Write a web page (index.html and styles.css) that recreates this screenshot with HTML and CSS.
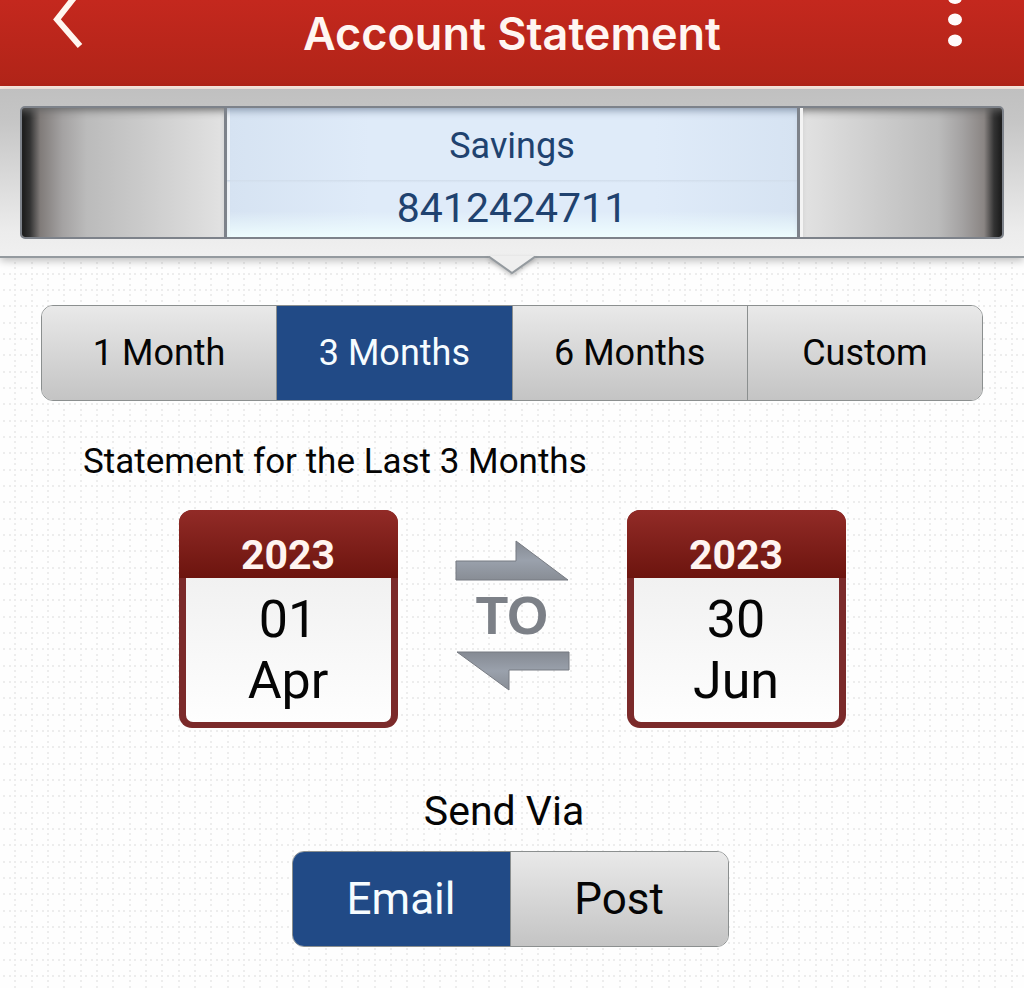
FILE: index.html
```html
<!DOCTYPE html>
<html lang="en">
<head>
<meta charset="utf-8">
<meta name="viewport" content="width=device-width, initial-scale=1">
<title>Account Statement</title>
<link rel="stylesheet" href="styles.css">
</head>
<body>
<header class="topbar">
  <button class="icon-button" type="button" aria-label="Back">
    <svg width="40" height="60" viewBox="0 0 40 60"><path d="M37 -15 L10 19.500 L33 46" fill="none" stroke="#fff6f0" stroke-width="6"/></svg>
  </button>
  <h1 class="title">Account Statement</h1>
  <button class="icon-button" type="button" aria-label="More options">
    <svg width="40" height="60" viewBox="0 0 40 60" fill="#fffafa"><ellipse cx="18" cy="-2" rx="7" ry="6"/><ellipse cx="18" cy="19.500" rx="7" ry="6"/><ellipse cx="18" cy="40.500" rx="7" ry="6"/></svg>
  </button>
</header>

<section class="account-panel" aria-label="Account">
  <div class="wheel">
    <div class="wheel-side wheel-left"></div>
    <div class="wheel-center">
      <p class="account-type">Savings</p>
      <p class="account-number">8412424711</p>
    </div>
    <div class="wheel-side wheel-right"></div>
  </div>
  <svg class="notch" width="48" height="26" viewBox="0 0 48 26" aria-hidden="true">
    <path d="M0 0 H48 L24 17 Z" fill="#efefef"/>
    <path d="M0 0 L24 17 L48 0" fill="none" stroke="#949a9f" stroke-width="2"/>
  </svg>
</section>

<main class="content">
  <div class="segments period" role="group" aria-label="Period">
    <button class="segment" type="button" aria-pressed="false">1 Month</button>
    <button class="segment" type="button" aria-pressed="true">3 Months</button>
    <button class="segment" type="button" aria-pressed="false">6 Months</button>
    <button class="segment" type="button" aria-pressed="false">Custom</button>
  </div>

  <p class="caption">Statement for the Last 3 Months</p>

  <div class="range">
    <button class="calendar" type="button">
      <span class="calendar-year">2023</span>
      <span class="calendar-date"><span>01</span><span>Apr</span></span>
    </button>
    <div class="direction">
      <svg width="115" height="42" viewBox="0 0 115 42" aria-hidden="true">
        <defs><linearGradient id="steel" x1="0" y1="0" x2="0" y2="1"><stop offset="0" stop-color="#858a93"/><stop offset="0.500" stop-color="#9aa1ac"/><stop offset="1" stop-color="#888d95"/></linearGradient></defs>
        <path d="M1 21 H61 V1 L113 40 H1 Z" fill="url(#steel)" stroke="#777b82" stroke-width="1"/>
      </svg>
      <span class="direction-label">TO</span>
      <svg width="115" height="42" viewBox="0 0 115 42" aria-hidden="true">
        <path d="M114 20 H54 V40 L2 2 H114 Z" fill="url(#steel)" stroke="#777b82" stroke-width="1"/>
      </svg>
    </div>
    <button class="calendar" type="button">
      <span class="calendar-year">2023</span>
      <span class="calendar-date"><span>30</span><span>Jun</span></span>
    </button>
  </div>

  <div class="delivery">
    <h2 class="send-title" id="send-title">Send Via</h2>
    <div class="segments send" role="group" aria-labelledby="send-title">
      <button class="segment" type="button" aria-pressed="true">Email</button>
      <button class="segment" type="button" aria-pressed="false">Post</button>
    </div>
  </div>
</main>
</body>
</html>
```
FILE: styles.css
```css
* { box-sizing: border-box; }

body {
  margin: 0;
  min-height: 100vh;
  font-family: Roboto, "Liberation Sans", sans-serif;
  color: #050505;
  background-color: #fefefe;
  background-image: url("data:image/svg+xml,%3Csvg xmlns='http://www.w3.org/2000/svg' width='49' height='49'%3E%3Cg fill='none' stroke='%23ededed' stroke-width='2' stroke-dasharray='2 3 2 4 2 3 2 4 2 3 2 4 2 3 2 4 2 3'%3E%3Cpath d='M0 1H49M0 17H49M0 34H49M1 0V49M17 0V49M34 0V49'/%3E%3C/g%3E%3C/svg%3E");
  background-position: -2px 44px;
}

button {
  font: inherit;
  color: inherit;
  padding: 0;
  border: 0;
  background: none;
  cursor: pointer;
}

p, h1, h2 { margin: 0; font-weight: 400; }

.topbar {
  display: flex;
  justify-content: space-between;
  align-items: flex-start;
  height: 89px;
  padding: 0 47px;
  background: linear-gradient(#c4281e, #b02418);
  border-bottom: 3px solid #f9e9e0;
}

.icon-button svg { display: block; }

.title {
  font-family: Inter, Roboto, sans-serif;
  font-size: 45px;
  line-height: 52px;
  padding-top: 8px;
  font-weight: 600;
  color: #fff6f2;
}

.account-panel {
  position: relative;
  padding: 17px 20px;
  background: linear-gradient(#c0c0c0, #c6c6c6 20%, #ececec 85%, #f0f0f0);
  border-bottom: 2px solid #949a9f;
  box-shadow: 0 3px 8px rgba(0, 0, 0, 0.250);
}

.wheel {
  display: grid;
  grid-template-columns: 202fr 576fr 202fr;
  height: 133px;
  border: 2px solid #7d828a;
  border-radius: 5px;
  overflow: hidden;
}

.wheel-side { box-shadow: inset 0 8px 8px -6px #666; }

.wheel-left {
  background: linear-gradient(90deg, #191919, #333 4%, #807b79 9%, #a4a2a2 20%, #bbb 32%, #e2e2e2);
}

.wheel-right {
  background: linear-gradient(270deg, #191919, #333 4%, #8a8583 9%, #a4a2a2 20%, #bbb 32%, #e2e2e2);
  border-left: 3px solid #f4f4f4;
}

.wheel-center {
  text-align: center;
  color: #20426f;
  border: solid #7d828a;
  border-width: 0 3px;
  background:
    linear-gradient(transparent 80%, rgba(240, 255, 255, 0.900)),
    linear-gradient(transparent 56%, #d2deec 56%, rgba(210, 222, 236, 0) 58%),
    linear-gradient(90deg, #f3f7fb 3px, #d6e3f2 3px, #dfebf9 25%, #dfebf9 75%, #d6e3f2);
  box-shadow: inset 0 8px 8px -6px #8292a8;
}

.account-type {
  font-size: 36px;
  line-height: 40px;
  padding-top: 18px;
}

.account-number {
  font-size: 41px;
  line-height: 48px;
  padding-top: 18px;
}

.notch {
  position: absolute;
  top: 100%;
  left: 50%;
  margin-left: -24px;
  filter: drop-shadow(0 2px 2px rgba(0, 0, 0, 0.250));
}

.content { padding: 47px 41px 41px; }

.segments {
  display: flex;
  height: 96px;
  border: 1px solid #8b8f8f;
  border-radius: 12px;
  overflow: hidden;
}

.segment {
  flex: 1;
  background: linear-gradient(#e9e9e9, #c4c4c4);
}

.segment + .segment { border-left: 1px solid #8b8f8f; }

.segment[aria-pressed="true"] {
  color: #f6fcff;
  background: #214a86;
}

.period { font-size: 36px; }

.caption {
  padding: 40px 42px 27px;
  font-size: 35px;
  line-height: 42px;
}

.range {
  display: flex;
  justify-content: center;
  align-items: flex-start;
  gap: 57px;
}

.calendar {
  width: 219px;
  border-radius: 13px;
  overflow: hidden;
  background: #7b2a2a;
  padding: 0 0 6px;
}

.calendar-year {
  display: block;
  height: 68px;
  padding-top: 21px;
  font-size: 41px;
  line-height: 48px;
  font-weight: 700;
  color: #fff4f0;
  background: linear-gradient(#922b27, #6c140e);
}

.calendar-date {
  display: block;
  margin: 0 7px;
  padding: 11px 0;
  border-radius: 0 0 7px 7px;
  font-size: 52px;
  line-height: 61px;
  background: linear-gradient(#f1f1f1, #fefefe);
}

.calendar-date span { display: block; }

.direction {
  display: flex;
  flex-direction: column;
  align-items: center;
  padding-top: 30px;
}

.direction svg { display: block; }

.direction-label {
  font-family: "Liberation Sans", sans-serif;
  font-size: 53px;
  line-height: 68px;
  font-weight: 700;
  color: #7c8087;
}

.delivery { padding-right: 4px; }

.send-title {
  padding: 59px 12px 16px 0;
  font-size: 41px;
  line-height: 48px;
  text-align: center;
}

.send {
  width: 437px;
  max-width: 100%;
  margin: 0 auto;
  font-size: 44px;
}
```
